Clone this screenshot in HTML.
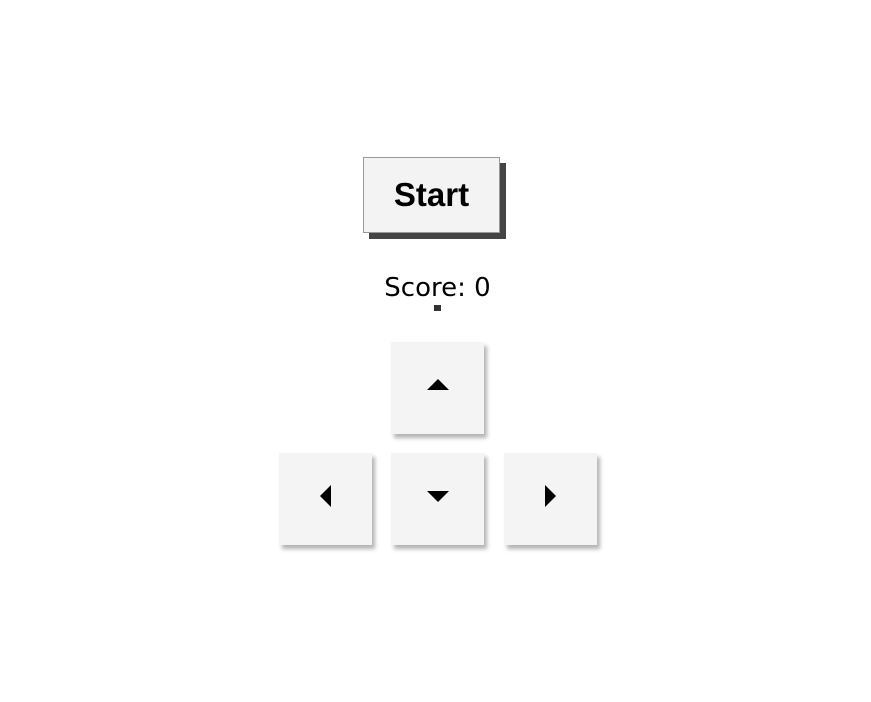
<!DOCTYPE html>
<html><head><style>
body{margin:0;width:871px;height:702px;background:#fff;position:relative;overflow:hidden}
.start{position:absolute;left:363px;top:157px;width:135px;height:74px;background:#f3f3f3;border:1px solid #999;box-shadow:6px 6px 0 #444;font:bold 33px "Liberation Sans",sans-serif;text-align:center;line-height:74px;color:#000}
.score{position:absolute;left:370px;width:135px;top:273px;font:26px "DejaVu Sans",sans-serif;text-align:center;color:#000}
.dot{position:absolute;left:434px;top:305px;width:7px;height:6px;background:#333}
.k{position:absolute;width:93px;height:92px;background:#f4f4f4;box-shadow:3px 4px 4px rgba(0,0,0,.3)}
.k svg{position:absolute;left:0;top:0}
</style></head><body>
<div class="start">Start</div>
<div class="score">Score: 0</div>
<div class="dot"></div>
<div class="k" style="left:391px;top:342px"><svg width="93" height="92"><polygon points="36,48 58,48 47,37" fill="#000"/></svg></div>
<div class="k" style="left:279px;top:453px"><svg width="93" height="92"><polygon points="52,32 52,54 41,43" fill="#000"/></svg></div>
<div class="k" style="left:391px;top:453px"><svg width="93" height="92"><polygon points="36,38 58,38 47,49" fill="#000"/></svg></div>
<div class="k" style="left:504px;top:453px"><svg width="93" height="92"><polygon points="41,32 41,54 52,43" fill="#000"/></svg></div>
</body></html>
